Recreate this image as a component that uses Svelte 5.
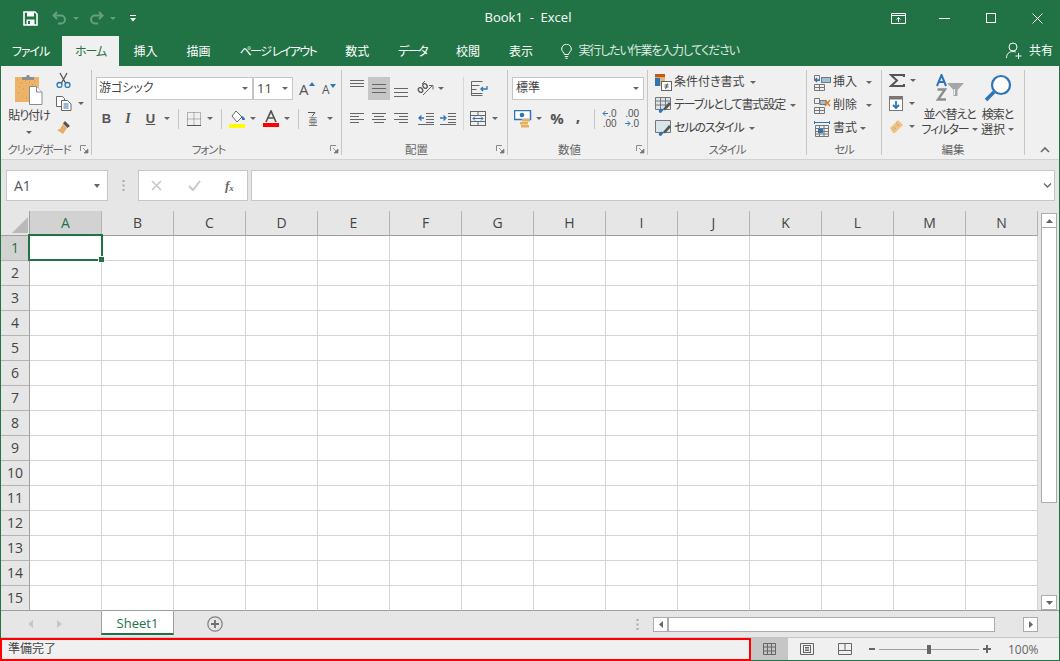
<script>
  const cols = ['A','B','C','D','E','F','G','H','I','J','K','L','M','N'];
  const rows = Array.from({ length: 15 }, (_, i) => i + 1);
  const tabs = [
    { t: '挿入' }, { t: '描画' }, { t: 'ページ レイアウト', kana: true },
    { t: '数式' }, { t: 'データ', kana: true }, { t: '校閲' }, { t: '表示' }
  ];
</script>

{#snippet caret()}<i class="caret"></i>{/snippet}
{#snippet launcher()}
  <svg class="launcher" width="9" height="9" viewBox="0 0 9 9"><path d="M.5 6V.5H6" fill="none" stroke="#8a8a8a"/><path d="M3 3l4 4M8 4v4H4z" fill="#777" stroke="#777" stroke-width=".7"/></svg>
{/snippet}

<div class="app">
  <header class="title">
    <div class="qat">
      <svg class="q-save" width="15" height="15" viewBox="0 0 15 15"><path d="M1 1h11l2 2v11H1z" fill="none" stroke="#fff" stroke-width="1.6"/><rect x="4" y="1" width="7" height="4.5" fill="#fff"/><rect x="3.5" y="8.5" width="8" height="5.5" fill="#fff"/><rect x="5" y="10" width="2" height="3" fill="#217346"/></svg>
      <svg class="q-undo" width="15" height="14" viewBox="0 0 15 14"><path d="M5 1L1.500 4.500 5 8M2 4.500h7a4 4 0 0 1 0 8H6" fill="none" stroke="#659e82" stroke-width="2"/></svg>
      <i class="caret c-dim q-c1"></i>
      <svg class="q-redo" width="15" height="14" viewBox="0 0 15 14"><path d="M10 1l3.500 3.500L10 8M13 4.500H6a4 4 0 0 0 0 8h3" fill="none" stroke="#659e82" stroke-width="2"/></svg>
      <i class="caret c-dim q-c2"></i>
      <svg class="q-more" width="6" height="7" viewBox="0 0 6 7"><path d="M0 .5h6" stroke="#fff"/><path d="M0 3h6L3 6.500z" fill="#fff"/></svg>
    </div>
    <div class="doc">Book1&nbsp; - &nbsp;Excel</div>
    <div class="win">
      <svg class="w-disp" width="15" height="11" viewBox="0 0 15 11"><path d="M.5.500h14v10H.5zM.5 2.500h14" fill="none" stroke="#fff"/><path d="M7.500 9V4.500M5.500 6.500l2-2 2 2" fill="none" stroke="#fff"/></svg>
      <svg class="w-min" width="11" height="1" viewBox="0 0 11 1"><path d="M0 .5h11" stroke="#fff"/></svg>
      <svg class="w-max" width="10" height="10" viewBox="0 0 10 10"><rect x=".5" y=".5" width="9" height="9" fill="none" stroke="#fff"/></svg>
      <svg class="w-close" width="11" height="11" viewBox="0 0 11 11"><path d="M.5.500l10 10M10.500.500l-10 10" stroke="#fff" fill="none"/></svg>
    </div>
  </header>

  <nav class="tabs">
    <span class="tab file kana">ファイル</span>
    <span class="tab active kana">ホーム</span>
    {#each tabs as t}<span class="tab" class:ktab={t.kana}>{t.t}</span>{/each}
    <svg class="bulb" width="11" height="15" viewBox="0 0 11 15"><path d="M3.500 10.500C3 8 .7 7.500.7 5a4.800 4.800 0 0 1 9.600 0c0 2.500-2.300 3-2.800 5.500zM3.800 12.500h3.400M4.500 14.300h2" fill="none" stroke="#fff"/></svg>
    <span class="tell">実行したい作業を入力してください</span>
    <svg class="person" width="16" height="18" viewBox="0 0 16 18"><circle cx="7" cy="5" r="4" fill="none" stroke="#fff"/><path d="M.5 16c0-4 2.500-6.500 6.500-6.500 1 0 2 .2 2.800.6M12.500 11v6M9.500 14h6" fill="none" stroke="#fff"/></svg>
    <span class="share">共有</span>
  </nav>

  <div class="body">
    <section class="ribbon">
      <div class="group g-clip">
        <div class="gbody clip">
          <div class="paste">
            <svg width="30" height="31" viewBox="0 0 30 31"><rect x="1" y="3" width="24" height="25" fill="#edb469"/><path d="M3 6h1M7 9h1M11 7h1M5 13h1M9 15h1M4 19h1M8 22h1M12 24h1M15 8h1M20 7h1M18 11h1" stroke="#cf9140"/><path d="M8 6V3h4l1-2h2l1 2h4v3z" fill="#8f8f8f"/><path d="M15.500 12.500h7l5.500 5.500v12.500h-12.500z" fill="#fff" stroke="#8a8a8a"/><path d="M22.500 12.500v5.500H28" fill="#fff" stroke="#8a8a8a"/></svg>
            <span class="paste-t">貼り付け</span>
            {@render caret()}
          </div>
          <div class="clip-tools">
            <svg width="15" height="16" viewBox="0 0 15 16"><path d="M4 1l5.500 10M11 1L5.500 11" stroke="#555" stroke-width="1.300" fill="none"/><circle cx="3.500" cy="13" r="2.500" fill="none" stroke="#2e75b6" stroke-width="1.300"/><circle cx="11.500" cy="13" r="2.500" fill="none" stroke="#2e75b6" stroke-width="1.300"/></svg>
            <div class="rowc"><svg width="16" height="15" viewBox="0 0 16 15"><path d="M.5.500h6l2 2v8h-8z" fill="#fff" stroke="#666"/><path d="M5.500 4.500h6l3.500 3.500v6.500h-9.500z" fill="#fff" stroke="#666"/><path d="M7.500 8h5M7.500 10h5M7.500 12h5" stroke="#2e75b6"/></svg>{@render caret()}</div>
            <svg width="16" height="16" viewBox="0 0 16 16"><path d="M9 2l5 5-2.500 2L7 4.500z" fill="#555"/><path d="M7 5l4 4-4 6-6-4 3-1z" fill="#e8ae62"/></svg>
          </div>
        </div>
        <div class="glabel kana l-clip">クリップボード</div>
        {@render launcher()}
      </div>

      <div class="group g-font">
        <div class="gbody">
          <div class="font-r1">
            <div class="select s-name"><span>游ゴシック</span>{@render caret()}</div>
            <div class="select s-size"><span class="num">11</span>{@render caret()}</div>
            <span class="growa big">A<svg width="6" height="4" viewBox="0 0 6 4"><path d="M0 4l3-4 3 4z" fill="#2e75b6"/></svg></span>
            <span class="growa small">A<svg width="6" height="4" viewBox="0 0 6 4"><path d="M0 0l3 4 3-4z" fill="#2e75b6"/></svg></span>
          </div>
          <div class="r2 font-r2">
            <b class="fmt">B</b>
            <em class="fmt it">I</em>
            <u class="fmt und">U</u>
            {@render caret()}
            <i class="vsep"></i>
            <svg width="14" height="14" viewBox="0 0 14 14"><path d="M.5.500h13v13H.5zM7 .5v13M.5 7h13" fill="none" stroke="#777" stroke-dasharray="1 1"/><path d="M0 13.500h14" stroke="#555"/></svg>
            {@render caret()}
            <i class="vsep"></i>
            <svg width="17" height="18" viewBox="0 0 17 18"><path d="M7 1l6 6-5 5-5-6z" fill="#fff" stroke="#666"/><path d="M13 6c2 1 3 2 3 4h-3z" fill="#2e75b6"/><rect y="14" width="16" height="4" fill="#ff0"/></svg>
            {@render caret()}
            <svg width="16" height="17" viewBox="0 0 16 17"><path d="M3 12L8 1l5 11M5 8h6" fill="none" stroke="#555" stroke-width="1.700"/><rect y="13" width="16" height="4" fill="#f00"/></svg>
            {@render caret()}
            <i class="vsep"></i>
            <span class="phon"><svg width="8" height="6" viewBox="0 0 8 6"><path d="M0 1.500h7l-3 4" fill="none" stroke="#555"/></svg><span>亜</span></span>
            {@render caret()}
          </div>
        </div>
        <div class="glabel kana l-pad">フォント</div>
        {@render launcher()}
      </div>

      <div class="group g-align">
        <div class="gbody">
          <div class="r1 align-r1">
            <svg class="vtop" width="14" height="8" viewBox="0 0 14 8"><path d="M0 .5h14M0 3.500h14M0 6.500h14" stroke="#666"/></svg>
            <span class="on"><svg width="14" height="9" viewBox="0 0 14 9"><path d="M0 .5h14M0 4.500h14M0 8.500h14" stroke="#666"/></svg></span>
            <svg class="vbot" width="14" height="9" viewBox="0 0 14 9"><path d="M0 .5h14M0 4.500h14M0 8.500h14" stroke="#666"/></svg>
            <svg width="17" height="15" viewBox="0 0 17 15"><ellipse cx="3.500" cy="9" rx="2" ry="2.500" transform="rotate(-40 3.500 9)" fill="none" stroke="#555" stroke-width="1.300"/><ellipse cx="8" cy="5" rx="2" ry="2.500" transform="rotate(-40 8 5)" fill="none" stroke="#555" stroke-width="1.300"/><path d="M5 3l3-3M6 14l9-9M12 4.500h4v4" fill="none" stroke="#666"/></svg>
            {@render caret()}
            <i class="vsep s-top"></i>
            <svg width="17" height="15" viewBox="0 0 17 15"><path d="M.5.500h11M.5 4.500h8M.5 8.500h5M.5 12.500h11M.5.500v14h11" fill="none" stroke="#666"/><path d="M16 5v3h-6M12 6l-2 2 2 2" fill="none" stroke="#2e75b6" stroke-width="1.300"/></svg>
          </div>
          <div class="r2 align-r2">
            <svg width="14" height="11" viewBox="0 0 14 11"><path d="M0 .5h14M0 3.500h9M0 6.500h14M0 9.500h9" stroke="#666"/></svg>
            <svg width="14" height="11" viewBox="0 0 14 11"><path d="M0 .5h14M2 3.500h10M0 6.500h14M2 9.500h10" stroke="#666"/></svg>
            <svg width="14" height="11" viewBox="0 0 14 11"><path d="M0 .5h14M5 3.500h9M0 6.500h14M5 9.500h9" stroke="#666"/></svg>
            <svg width="16" height="12" viewBox="0 0 16 12"><path d="M8 .5h8M8 3.500h8M8 6.500h8M8 9.500h8M0 11.500h16" fill="none" stroke="#666"/><path d="M6 5H1M3.500 2.500L1 5l2.500 2.500" fill="none" stroke="#2e75b6" stroke-width="1.300"/></svg>
            <svg width="16" height="12" viewBox="0 0 16 12"><path d="M8 .5h8M8 3.500h8M8 6.500h8M8 9.500h8M0 11.500h16" fill="none" stroke="#666"/><path d="M0 5h5M3.500 2.500L6 5 3.500 7.500" fill="none" stroke="#2e75b6" stroke-width="1.300"/></svg>
            <i class="vsep s-bot"></i>
            <svg width="17" height="15" viewBox="0 0 17 15"><rect x=".5" y=".5" width="15" height="14" fill="none" stroke="#666"/><path d="M.5 4.500h15M.5 10.500h15M8 .5v4M8 10.500v4" stroke="#666"/><path d="M3 7.500h10M5 5.500l-2 2 2 2M11 5.500l2 2-2 2" fill="none" stroke="#2e75b6"/></svg>
            {@render caret()}
          </div>
        </div>
        <div class="glabel l-pad">配置</div>
        {@render launcher()}
      </div>

      <div class="group g-num">
        <div class="gbody">
          <div class="select s-fmt"><span>標準</span>{@render caret()}</div>
          <div class="r2 num-r2">
            <svg width="18" height="18" viewBox="0 0 18 18"><rect x=".5" y=".5" width="16" height="9" fill="#fff" stroke="#2e75b6" stroke-width="1.500"/><circle cx="8" cy="5" r="2.300" fill="#2e75b6"/><rect x="8" y="9" width="8" height="2.500" fill="#e8ae62"/><rect x="6" y="12" width="8" height="2.500" fill="#e8ae62"/><rect x="7" y="15" width="8" height="2.500" fill="#e8ae62"/></svg>
            {@render caret()}
            <span class="pct">%</span>
            <span class="comma">,</span>
            <i class="vsep"></i>
            <span class="dec"><span class="dline"><svg width="6" height="7" viewBox="0 0 6 7"><path d="M6 3.500H1M3.500 1L1 3.500 3.500 6" fill="none" stroke="#2e75b6"/></svg>.0</span><span class="dline">.00</span></span>
            <span class="dec"><span class="dline">.00</span><span class="dline"><svg width="6" height="7" viewBox="0 0 6 7"><path d="M0 3.500h5M2.500 1L5 3.500 2.500 6" fill="none" stroke="#2e75b6"/></svg>.0</span></span>
          </div>
        </div>
        <div class="glabel l-pad">数値</div>
        {@render launcher()}
      </div>

      <div class="group g-style">
        <div class="gbody stack">
          <div class="srow">
            <svg width="17" height="17" viewBox="0 0 17 17"><rect width="10" height="3.500" fill="#c55a11"/><rect y="4" width="5" height="8" fill="#2e75b6"/><rect x="5" y="4" width="5" height="8" fill="#e9b872"/><rect x="6.500" y="7.500" width="10" height="9" fill="#fff" stroke="#666"/><path d="M9.500 11h4M9.500 13h4M12.500 9.500l-2 5.500" stroke="#555" fill="none"/></svg>
            <span>条件付き書式</span>{@render caret()}
          </div>
          <div class="srow">
            <svg width="17" height="17" viewBox="0 0 17 17"><path d="M.5.500h15v12H.5zM.5 4h15M.5 8h15M5.500.5v12M10.500.5v12" fill="#d8e6ec" stroke="#777"/><path d="M6 16c-2 0-2.500-1-2-3l3-1.500 1.500 1.500z" fill="#2e75b6"/><path d="M8 12l6-7 2 2-6 6.500z" fill="#555"/></svg>
            <span class="kana">テーブルとして書式設定</span>{@render caret()}
          </div>
          <div class="srow">
            <svg width="17" height="17" viewBox="0 0 17 17"><path d="M.5.500h15v12H.5z" fill="#d8e6ec" stroke="#777"/><path d="M6 16c-2 0-2.500-1-2-3l3-1.500 1.500 1.500z" fill="#2e75b6"/><path d="M8 12l6-7 2 2-6 6.500z" fill="#555"/></svg>
            <span class="kana">セルのスタイル</span>{@render caret()}
          </div>
        </div>
        <div class="glabel kana">スタイル</div>
      </div>

      <div class="group g-cell">
        <div class="gbody stack">
          <div class="crow">
            <svg width="17" height="16" viewBox="0 0 17 16"><path d="M.5 9.500h10v6H.5zM5.500 9.500v6M.5 12.500h10M.5.500h5v5h-5z" fill="none" stroke="#777"/><rect x="7.500" y="2.500" width="9" height="5" fill="#9cc3dd" stroke="#777"/><path d="M6 5H1M3 3L1 5l2 2" fill="none" stroke="#2e75b6" stroke-width="1.300"/></svg>
            <span>挿入</span>{@render caret()}
          </div>
          <div class="crow">
            <svg width="17" height="16" viewBox="0 0 17 16"><path d="M.5 9.500h10v6H.5zM5.500 9.500v6M.5 12.500h10M.5.500h5v5h-5z" fill="none" stroke="#777"/><rect x="6" y="2.500" width="6" height="4" fill="#9cc3dd" stroke="#777"/><path d="M11 2l5 6M16 2l-5 6" stroke="#d97b27" stroke-width="1.400"/></svg>
            <span>削除</span>{@render caret()}
          </div>
          <div class="crow">
            <svg width="17" height="16" viewBox="0 0 17 16"><path d="M.5 0v3M15.500 0v3M1 1.500h14" stroke="#2e75b6"/><path d="M1.500 4.500h13v11h-13zM1.500 7.500h13M1.500 10.500h13M1.500 13h13M5.500 4.500v11M10 4.500v11" fill="none" stroke="#777"/><rect x="4" y="8" width="5" height="4" fill="#2e75b6"/></svg>
            <span>書式</span>{@render caret()}
          </div>
        </div>
        <div class="glabel kana">セル</div>
      </div>

      <div class="group g-edit">
        <div class="gbody editb">
          <div class="edit-l">
            <div class="erow"><svg width="16" height="13" viewBox="0 0 16 13"><path d="M15 3V1H2l6 5.500L2 12h13v-2" fill="none" stroke="#555" stroke-width="2"/></svg>{@render caret()}</div>
            <div class="erow"><svg width="15" height="15" viewBox="0 0 15 15"><rect x=".5" y=".5" width="13" height="14" fill="#fff" stroke="#777"/><rect x="1" y="1" width="12" height="2.500" fill="#777"/><path d="M7 5v7M4 9l3 3 3-3" fill="none" stroke="#2e75b6" stroke-width="1.800"/></svg>{@render caret()}</div>
            <div class="erow"><svg width="15" height="15" viewBox="0 0 15 15"><path d="M1 9l8-8 5 5-8 8H4z" fill="#efc28a"/><path d="M5 8l2 2M8 5l2 2M4 11l1-1M7 3l1 1" stroke="#d69a50"/></svg>{@render caret()}</div>
          </div>
          <div class="big-b sort">
            <svg width="30" height="28" viewBox="0 0 30 28"><path d="M2 12L6.500 1 11 12M3.500 8h6" fill="none" stroke="#2e75b6" stroke-width="2"/><path d="M2.500 15.500h7.500L3 25.500h8" fill="none" stroke="#8d8d8d" stroke-width="2.400"/><path d="M12 9h17l-6.500 7v6h-4v-6z" fill="#a6a6a6"/><path d="M19.500 15v6" stroke="#eee"/></svg>
            <span class="kana">並べ替えと</span>
            <span class="t2"><span class="kana">フィルター</span>{@render caret()}</span>
          </div>
          <div class="big-b find">
            <svg width="28" height="28" viewBox="0 0 28 28"><circle cx="17" cy="11" r="9" fill="#fff" stroke="#2e75b6" stroke-width="2.200"/><path d="M10 18l-8 8" stroke="#2e75b6" stroke-width="3.500"/></svg>
            <span class="kana">検索と</span>
            <span class="t2">選択{@render caret()}</span>
          </div>
        </div>
        <div class="glabel">編集</div>
      </div>

      <div class="collapse"><svg width="10" height="6" viewBox="0 0 10 6"><path d="M1 5l4-4 4 4" fill="none" stroke="#666" stroke-width="1.600"/></svg></div>
    </section>

    <section class="fbar">
      <div class="box namebox"><span>A1</span><i class="caret"></i></div>
      <svg class="dots" width="3" height="11" viewBox="0 0 3 11"><path d="M1.500 0v2M1.500 4.500v2M1.500 9v2" stroke="#a8a8a8" stroke-width="2"/></svg>
      <div class="box fbtns">
        <svg width="11" height="11" viewBox="0 0 11 11"><path d="M1 1l9 9M10 1l-9 9" stroke="#c8c8c8" stroke-width="1.600"/></svg>
        <svg width="13" height="11" viewBox="0 0 13 11"><path d="M1 6l4 4 7-9" fill="none" stroke="#c8c8c8" stroke-width="2"/></svg>
        <span class="fx">f<sub>x</sub></span>
      </div>
      <div class="box finput"><svg width="9" height="5" viewBox="0 0 9 5"><path d="M1 .5l3.500 3.500L8 .5" fill="none" stroke="#666" stroke-width="1.300"/></svg></div>
    </section>

    <section class="sheet">
      <div class="grid">
        <div class="corner"><svg width="16" height="16" viewBox="0 0 16 16"><path d="M16 0v16H0z" fill="#b9b9b9"/></svg></div>
        {#each cols as c, i}<div class="ch" class:sel={i === 0}>{c}</div>{/each}
        {#each rows as r}
          <div class="rh" class:sel={r === 1}>{r}</div>
          {#each cols as c}<div class="cell"></div>{/each}
        {/each}
        <div class="cursor"><i></i></div>
      </div>
      <aside class="vscroll">
        <span class="sbtn"><svg width="7" height="4" viewBox="0 0 7 4"><path d="M0 4l3.500-4L7 4z" fill="#666"/></svg></span>
        <span class="vthumb"></span>
        <span class="sbtn"><svg width="7" height="4" viewBox="0 0 7 4"><path d="M0 0l3.500 4L7 0z" fill="#666"/></svg></span>
      </aside>
    </section>

    <section class="sheetbar">
      <div class="nav">
        <svg width="5" height="8" viewBox="0 0 5 8"><path d="M5 0L0 4l5 4z" fill="#c6c6c6"/></svg>
        <svg width="5" height="8" viewBox="0 0 5 8"><path d="M0 0l5 4-5 4z" fill="#c6c6c6"/></svg>
      </div>
      <div class="stab">Sheet1</div>
      <svg class="plus" width="16" height="16" viewBox="0 0 16 16"><circle cx="8" cy="8" r="7.200" fill="none" stroke="#7f7f7f" stroke-width="1.200"/><path d="M8 4v8M4 8h8" stroke="#6f6f6f" stroke-width="1.800"/></svg>
      <svg class="dots2" width="3" height="11" viewBox="0 0 3 11"><path d="M1.500 0v2M1.500 4.500v2M1.500 9v2" stroke="#a8a8a8" stroke-width="2"/></svg>
      <div class="hscroll">
        <span class="hbtn"><svg width="4" height="7" viewBox="0 0 4 7"><path d="M4 0L0 3.500 4 7z" fill="#666"/></svg></span>
        <span class="hthumb"></span>
        <span class="hbtn end"><svg width="4" height="7" viewBox="0 0 4 7"><path d="M0 0l4 3.500L0 7z" fill="#666"/></svg></span>
      </div>
    </section>
  </div>

  <footer class="status">
    <div class="ready">準備完了</div>
    <div class="views">
      <span class="view active"><svg width="13" height="12" viewBox="0 0 13 12"><path d="M.5.500h12v11H.5zM.5 4h12M.5 8h12M4.500.5v11M8.500.5v11" fill="none" stroke="#666"/></svg></span>
      <span class="view"><svg width="14" height="12" viewBox="0 0 14 12"><path d="M.5.500h13v11H.5z" fill="none" stroke="#666"/><rect x="3.500" y="2.500" width="7" height="7" fill="none" stroke="#666"/><path d="M5 4.500h4M5 6h4M5 7.500h4" stroke="#666"/></svg></span>
      <span class="view"><svg width="14" height="12" viewBox="0 0 14 12"><path d="M.5.500h13v11H.5zM.5 7.500h13M7 .5v7" fill="none" stroke="#666"/></svg></span>
      <svg class="zminus" width="6" height="2" viewBox="0 0 6 2"><path d="M0 1h6" stroke="#666" stroke-width="2"/></svg>
      <div class="slider"><i></i></div>
      <svg class="zplus" width="8" height="8" viewBox="0 0 8 8"><path d="M0 4h8M4 0v8" stroke="#666" stroke-width="2"/></svg>
      <span class="pctz">100%</span>
    </div>
  </footer>
</div>

<style>
  :global(body) { margin: 0; background: #217346; }
  .app {
    width: 1060px; height: 661px; display: flex; flex-direction: column; overflow: hidden;
    background: #217346; color: #444;
    font: 12px/1.2 "Noto Sans", "Noto Sans CJK JP", sans-serif;
    font-feature-settings: "palt";
  }
  svg { display: block; flex: none; }
  .kana { letter-spacing: -1.1px; }
  .caret { display: inline-block; width: 0; height: 0; flex: none; border: 3px solid transparent; border-top: 3px solid #666; border-bottom: 0; }
  .c-dim { border-top-color: #659e82; }

  .title { height: 36px; flex: none; display: flex; align-items: center; color: #fff; }
  .qat { display: flex; align-items: center; padding-left: 23px; width: 320px; box-sizing: border-box; }
  .q-undo { margin-left: 14px; }
  .q-c1 { margin-left: 6px; }
  .q-redo { margin-left: 10px; }
  .q-c2 { margin-left: 6px; }
  .q-more { margin-left: 14px; }
  .doc { width: 416px; text-align: center; font-size: 13px; color: #fff; font-family: "Open Sans", sans-serif; }
  .win { display: flex; align-items: center; flex: 1; padding-left: 155px; }
  .w-min { margin-left: 33px; }
  .w-max { margin-left: 36px; }
  .w-close { margin-left: 36px; }

  .tabs { height: 30px; flex: none; display: flex; align-items: center; color: #fff; }
  .tab { height: 30px; line-height: 31px; padding: 0 14.500px; white-space: nowrap; font-size: 12px; }
  .tab.ktab { letter-spacing: -1.600px; }
  .tab.file { padding: 0 12px; width: 62px; box-sizing: border-box; }
  .tab.active { width: 57px; box-sizing: border-box; text-align: center; padding: 0; background: #f0f0f0; color: #217346; }
  .bulb { margin-left: 14px; }
  .tell { margin-left: 6px; color: #fff; opacity: .85; letter-spacing: -1.150px; }
  .person { margin-left: auto; }
  .share { margin: 0 7px 0 7px; }

  .body { flex: 1; min-height: 0; margin: 0 1px; display: flex; flex-direction: column; background: #e6e6e6; }

  .ribbon { height: 94px; flex: none; box-sizing: border-box; padding-top: 4px; background: #f0f0f0; border-bottom: 1px solid #d2d2d2; display: flex; align-items: flex-start; }
  .group { height: 85px; box-sizing: border-box; flex: none; display: flex; flex-direction: column; border-right: 1px solid #c6c6c6; position: relative; }
  .gbody { height: 73px; box-sizing: border-box; }
  .glabel { height: 12px; line-height: 13px; text-align: center; color: #666; font-size: 11.500px; white-space: nowrap; }
  .l-pad { padding-right: 16px; }
  .l-clip { padding-right: 14px; }
  .launcher { position: absolute; right: 2px; bottom: 1px; }
  .g-clip { width: 91px; }
  .g-font { width: 250px; }
  .g-align { width: 166px; }
  .g-num { width: 140px; }
  .g-style { width: 159px; }
  .g-cell { width: 75px; }
  .g-edit { width: 143px; }

  .clip { display: flex; padding: 0 0 0 6px; }
  .paste { width: 44px; display: flex; flex-direction: column; align-items: center; padding-top: 4px; }
  .paste-t { margin-top: 4px; white-space: nowrap; font-size: 12px; line-height: 14px; letter-spacing: -1px; }
  .paste .caret { margin-top: 8px; }
  .clip-tools { margin-left: 5px; display: flex; flex-direction: column; padding-top: 2px; gap: 8px; align-items: flex-start; }
  .rowc { display: flex; align-items: center; gap: 6px; }

  .select { height: 23px; box-sizing: border-box; border: 1px solid #c6c6c6; background: #fff; display: flex; align-items: center; justify-content: space-between; padding: 0 4px 0 2px; font-size: 12px; flex: none; }
  .font-r1 { display: flex; align-items: flex-start; padding: 7px 0 0 4px; }
  .s-name { width: 157px; }
  .s-size { width: 40px; padding-left: 3px; }
  .num { font-size: 13px; font-family: "Open Sans", sans-serif; }
  .growa { display: flex; align-items: flex-start; color: #555; font-family: "Open Sans", sans-serif; line-height: 1; height: 23px; padding-top: 5px; box-sizing: border-box; }
  .growa.big { font-size: 15px; margin-left: 6px; width: 23px; }
  .growa.small { font-size: 12px; padding-top: 7px; }

  .r2 { display: grid; grid-template-rows: 23px; align-items: center; justify-items: center; height: 23px; margin-top: 7px; }
  .font-r2 { padding-left: 4px; grid-template-columns: 21px 22px 23px 10px 12px 19px 13px 10px 22px 10px 26px 6px 16px 14px 20px; }
  .fmt { font: 700 13px/1 "Liberation Sans", sans-serif; color: #555; text-decoration: none; }
  .it { font-family: "Liberation Serif", serif; font-style: italic; font-weight: 700; font-size: 14px; }
  .und { text-decoration: underline; }
  .vsep { display: block; width: 1px; height: 20px; background: #c6c6c6; }
  .vsep.s-top { height: 30px; align-self: start; justify-self: end; background: #d6d6d6; }
  .vsep.s-bot { height: 23px; align-self: start; justify-self: end; background: #d6d6d6; }
  .phon { display: flex; flex-direction: column; align-items: flex-start; font-size: 9px; line-height: 10px; color: #555; }

  .r1 { display: grid; grid-template-rows: 23px; align-items: center; justify-items: center; }
  .align-r1 { height: 23px; margin-top: 7px; padding-left: 8px; grid-template-columns: 18px 22px 22px 26px 6px 20px 30px; }
  .align-r1 .vtop { align-self: start; margin-top: 3px; justify-self: start; }
  .align-r1 .vbot { align-self: end; margin-bottom: 3px; }
  .on { width: 22px; height: 23px; background: #c6c6c6; display: flex; align-items: center; justify-content: center; }
  .align-r2 { padding-left: 4px; grid-template-columns: 22px 22px 22px 28px 16px 8px 28px 6px; }

  .s-fmt { width: 132px; margin: 7px 0 0 4px; padding-left: 3px; }
  .num-r2 { padding-left: 6px; grid-template-columns: 18px 14px 22px 20px 12px 19px 26px; justify-content: start; }
  .pct { font: 700 15px/1 "Open Sans", sans-serif; color: #555; }
  .comma { font: 700 16px/1 "Open Sans", sans-serif; color: #555; margin-top: -6px; }
  .dec { font: 10px/10px "Liberation Sans", sans-serif; color: #555; white-space: nowrap; display: flex; flex-direction: column; align-items: flex-end; }
  .dline { display: flex; align-items: center; height: 10px; }

  .stack { display: flex; flex-direction: column; padding-top: 1px; }
  .srow, .crow { height: 23px; flex: none; display: flex; align-items: center; white-space: nowrap; font-size: 12px; }
  .srow { padding-left: 7px; }
  .srow span { margin: 0 5px 0 2px; }
  .crow { padding-left: 7px; }
  .crow span { width: 33px; margin-left: 2px; }
  .crow:last-child span { width: 27px; }

  .editb { display: flex; }
  .edit-l { width: 40px; padding: 2px 0 0 7px; box-sizing: border-box; display: flex; flex-direction: column; gap: 7px; }
  .erow { display: flex; align-items: center; gap: 5px; height: 16px; }
  .big-b { display: flex; flex-direction: column; align-items: center; white-space: nowrap; font-size: 12px; line-height: 15px; padding-top: 4px; }
  .big-b svg { margin-bottom: 5px; }
  .big-b .caret { margin: 0; }
  .sort { width: 53px; margin-left: 1px; }
  .find { width: 37px; margin-left: 3px; }
  .t2 { display: flex; align-items: center; gap: 3px; }

  .collapse { flex: 1; height: 85px; display: flex; align-items: flex-end; justify-content: center; padding: 0 0 2px 6px; box-sizing: border-box; }

  .fbar { height: 51px; box-sizing: border-box; flex: none; display: flex; align-items: flex-start; padding: 10px 4px 0 5px; background: #e6e6e6; }
  .box { height: 31px; box-sizing: border-box; background: #fff; border: 1px solid #c6c6c6; display: flex; align-items: center; }
  .namebox { width: 102px; justify-content: space-between; padding: 0 7px 0 7px; font: 14px "Open Sans", sans-serif; color: #555; }
  .namebox .caret { border-width: 4px 3.500px 0; }
  .dots { margin: 10px 13px 0 14px; }
  .fbtns { width: 110px; padding-left: 12px; gap: 26px; }
  .fx { font: italic 700 13px "Liberation Serif", serif; color: #666; margin-left: -2px; }
  .fx sub { font-size: 9px; vertical-align: -1px; line-height: 0; }
  .finput { flex: 1; margin-left: 3px; justify-content: flex-end; padding-right: 2px; }

  .sheet { flex: none; height: 400px; display: flex; background: #e6e6e6; }
  .grid { display: grid; grid-template-columns: 29px repeat(14, 72px); grid-template-rows: repeat(16, 25px); width: 1037px; position: relative; background: #fff; }
  .corner { background: #e6e6e6; border-right: 1px solid #9f9f9f; border-bottom: 1px solid #9f9f9f; box-sizing: border-box; display: flex; align-items: flex-end; justify-content: flex-end; padding: 0 1px 2px 0; }
  .ch, .rh { display: flex; align-items: center; justify-content: center; box-sizing: border-box; background: #e6e6e6; font: 14px "Open Sans", sans-serif; color: #444; padding-bottom: 1px; }
  .ch { border-right: 1px solid #b4b4b4; border-bottom: 1px solid #9f9f9f; }
  .rh { border-right: 1px solid #9f9f9f; border-bottom: 1px solid #b4b4b4; }
  .sel { background: #d2d2d2; color: #217346; }
  .cell { border-right: 1px solid #d4d4d4; border-bottom: 1px solid #d4d4d4; box-sizing: border-box; }
  .grid > :nth-last-child(-n+16):not(.cursor) { border-bottom-color: #9f9f9f; }
  .cursor { position: absolute; left: 27px; top: 23px; width: 75px; height: 27px; box-sizing: border-box; border: 2px solid #217346; }
  .cursor i { position: absolute; right: -4px; bottom: -4px; width: 5px; height: 5px; background: #217346; border: 1px solid #fff; }

  .vscroll { flex: 1; box-sizing: border-box; padding: 2px 2px 0 3px; display: flex; flex-direction: column; border-bottom: 1px solid #9f9f9f; }
  .sbtn { height: 15px; flex: none; box-sizing: border-box; border: 1px solid #ababab; background: #fff; display: flex; align-items: center; justify-content: center; }
  .vthumb { height: 275px; flex: none; margin-bottom: 92px; box-sizing: border-box; background: #fff; border: 1px solid #ababab; border-top: 0; }

  .sheetbar { height: 27px; flex: none; box-sizing: border-box; display: flex; align-items: flex-start; background: #e6e6e6; border-bottom: 1px solid #c6c6c6; }
  .nav { width: 100px; height: 26px; display: flex; align-items: center; gap: 24px; padding-left: 27px; box-sizing: border-box; }
  .stab { width: 73px; height: 24px; box-sizing: border-box; background: #fff; border: 1px solid #9f9f9f; border-width: 0 1px; border-bottom: 2px solid #217346; color: #217346; text-align: center; font: 13px/24px "Open Sans", sans-serif; }
  .plus { margin: 5px 0 0 33px; }
  .dots2 { margin: 8px 0 0 413px; }
  .hscroll { display: flex; margin: 6px 0 0 14px; height: 15px; }
  .hbtn { width: 15px; box-sizing: border-box; border: 1px solid #ababab; background: #fff; display: flex; align-items: center; justify-content: center; }
  .hthumb { width: 327px; margin-right: 28px; box-sizing: border-box; background: #fff; border: 1px solid #ababab; }

  .status { height: 23px; flex: none; display: flex; background: #f0f0f0; }
  .ready { width: 751px; box-sizing: border-box; border: 2px solid #f00; padding-left: 6px; line-height: 18px; font-size: 12px; color: #444; }
  .views { flex: 1; display: flex; align-items: center; border-bottom: 1px solid #217346; border-right: 1px solid #217346; }
  .view { width: 38px; height: 22px; display: flex; align-items: center; justify-content: center; }
  .view.active { width: 37px; background: #c6c6c6; }
  .zminus { margin-left: 5px; }
  .slider { width: 100px; height: 1px; margin-left: 4px; background: #a0a0a0; position: relative; }
  .slider i { position: absolute; left: 48px; top: -4px; width: 4px; height: 9px; background: #666; }
  .zplus { margin-left: 4px; }
  .pctz { margin-left: 17px; font: 12px "Open Sans", sans-serif; color: #666; }
</style>
